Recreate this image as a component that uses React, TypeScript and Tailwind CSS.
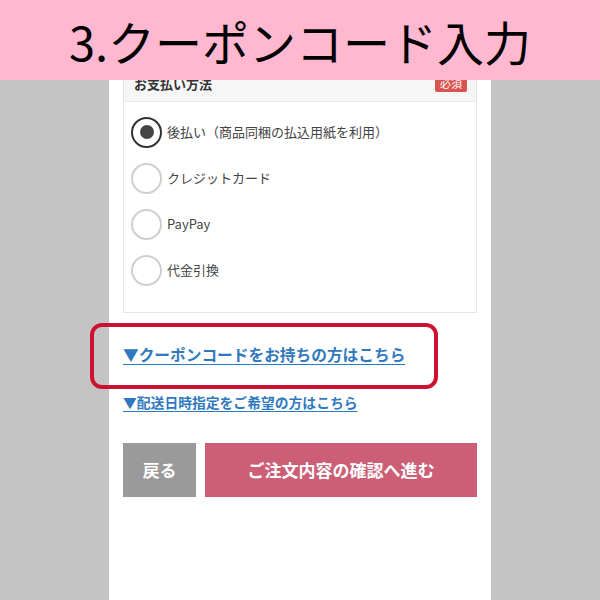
const jp = "font-['Noto_Sans_CJK_JP','Noto_Sans',sans-serif]";

const METHODS = ["後払い（商品同梱の払込用紙を利用）", "クレジットカード", "PayPay", "代金引換"];

function Radio({ checked }: { checked: boolean }) {
  return (
    <span
      className={
        checked
          ? "flex h-[31px] w-[31px] shrink-0 items-center justify-center rounded-full border-[2.5px] border-[#333]"
          : "flex h-[31px] w-[31px] shrink-0 items-center justify-center rounded-full border-2 border-[#cfcfcf]"
      }
    >
      {checked && <span className="h-[14px] w-[14px] rounded-full bg-[#444]" />}
    </span>
  );
}

export default function App() {
  return (
    <div className={`relative flex h-[600px] w-[600px] flex-col overflow-hidden bg-[#c4c4c4] ${jp}`}>
      {/* step title */}
      <div className="flex h-[80px] shrink-0 items-center justify-center bg-[#ffb8cf]">
        <h1 className="text-[47px] font-normal leading-none text-black">3.クーポンコード入力</h1>
      </div>

      <div className="mx-auto flex w-[382px] flex-1 flex-col bg-white px-[14px]">
        {/* payment card */}
        <div className="border border-t-0 border-[#e6e6e6]">
          <div className="flex h-[22px] items-center justify-between overflow-hidden border-b border-[#e8e8e8] bg-[#f6f6f6] pb-[14px] pl-[10px] pr-[9px]">
            <span className="text-[13px] font-bold text-[#333]">お支払い方法</span>
            <span className="rounded-[2px] bg-[#d9534f] px-[5px] py-[3px] text-[11px] leading-none text-white">必須</span>
          </div>
          <div className="flex flex-col pb-[19px] pl-[7px] pt-[7px]">
            {METHODS.map((m, i) => (
              <label key={m} className="flex h-[46px] items-center gap-[5px]">
                <Radio checked={i === 0} />
                <span className="text-[13px] text-[#444]">{m}</span>
              </label>
            ))}
          </div>
        </div>

        <a className="mt-[30px] text-[15.7px] font-bold leading-[24px] text-[#3179bf] underline underline-offset-[3px]">
          ▼クーポンコードをお持ちの方はこちら
        </a>
        <a className="mt-[25px] text-[13.8px] font-bold leading-[20px] text-[#3179bf] underline underline-offset-[3px]">
          ▼配送日時指定をご希望の方はこちら
        </a>

        <div className="mt-[31px] flex h-[54px] gap-[9px]">
          <button className="w-[73px] bg-[#9a9a9a] text-[17px] font-bold text-white">戻る</button>
          <button className="flex-1 bg-[#cc5f76] text-[17px] font-bold text-white">ご注文内容の確認へ進む</button>
        </div>
      </div>

      {/* highlight around the coupon link */}
      <div className="absolute left-[90px] top-[323px] h-[66px] w-[348px] rounded-[12px] border-[4px] border-[#cc1230]" />
    </div>
  );
}
